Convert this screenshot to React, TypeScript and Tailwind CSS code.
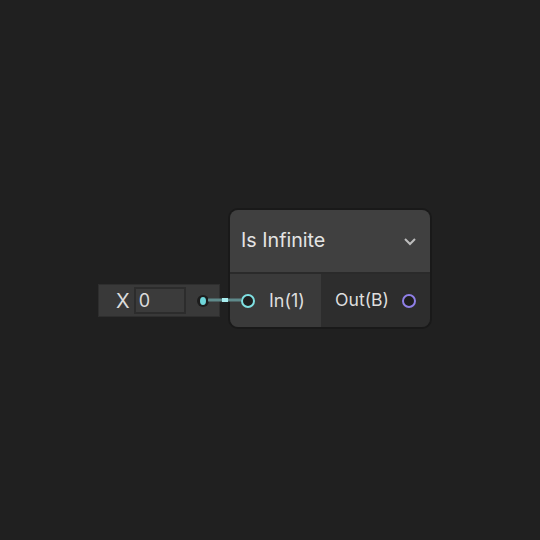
import React from 'react';

const font = { fontFamily: 'Inter, "Noto Sans", sans-serif' };

const Port: React.FC<{ color: string }> = ({ color }) => (
  <svg width="16" height="16" viewBox="0 0 16 16" className="shrink-0">
    <circle cx="8" cy="8" r="6" fill="#1f1f1f" stroke={color} strokeWidth="2" />
  </svg>
);

export default function App() {
  return (
    <div className="relative w-[540px] h-[540px] bg-[#202020] overflow-hidden text-[#e2e2e2]" style={font}>
      {/* constant input */}
      <div className="absolute left-[98px] top-[284px] w-[122px] h-[33px] bg-[#393939] border border-[#2e2e2e] flex items-center">
        <span className="ml-[17px] text-[20px] leading-none text-[#dcdcdc]">X</span>
        <div className="ml-[4px] w-[52px] h-[27px] bg-[#3b3b3b] border-2 border-[#2c2c2c] flex items-center pl-[3px] text-[18px] leading-none text-[#dcdcdc]">
          0
        </div>
        <svg width="14" height="14" viewBox="0 0 14 14" className="ml-[10px]">
          <circle cx="7" cy="7" r="6" fill="#1c1c1c" />
          <ellipse cx="7" cy="7" rx="3" ry="4" fill="#6fd6da" />
        </svg>
      </div>

      {/* node */}
      <div className="absolute left-[228px] top-[208px] w-[204px] h-[121px] rounded-[10px] border-2 border-[#191919] overflow-hidden flex flex-col">
        <div className="h-[64px] bg-[#404040] flex items-center justify-between pl-[11px] pr-[13px] border-b-2 border-[#2a2a2a]">
          <span className="text-[19.7px] text-[#e4e4e4]">Is Infinite</span>
          <svg width="14" height="10" viewBox="0 0 14 10">
            <path d="M2 3 L7 8 L12 3" fill="none" stroke="#bdbdbd" strokeWidth="2" />
          </svg>
        </div>
        <div className="flex-1 flex">
          <div className="w-[91px] bg-[#3a3a3a] flex items-center pl-[10px] gap-[13px]">
            <Port color="#7fe0e2" />
            <span className="text-[18px] text-[#dedede]">In(1)</span>
          </div>
          <div className="flex-1 bg-[#2d2d2d] flex items-center justify-end pr-[13px] gap-[12px]">
            <span className="text-[17.6px] text-[#dedede]">Out(B)</span>
            <Port color="#8f7fe6" />
          </div>
        </div>
      </div>

      {/* edge, drawn over the node edge */}
      <svg className="absolute left-[208px] top-[297px]" width="33" height="6" viewBox="0 0 33 6">
        <rect x="0" y="1.5" width="33" height="3" fill="#5f8a8b" />
        <rect x="14" y="1" width="6" height="4" fill="#a8eef0" />
      </svg>
    </div>
  );
}
